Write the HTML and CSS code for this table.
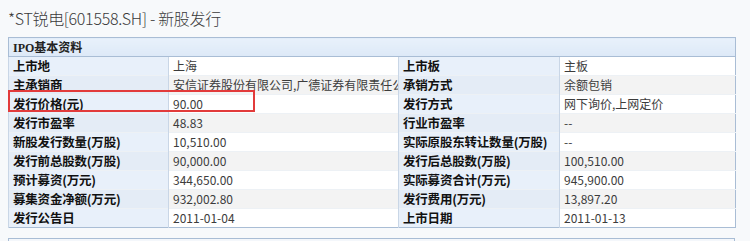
FILE: index.html
```html
<!DOCTYPE html>
<html lang="zh">
<head>
<meta charset="utf-8">
<link rel="stylesheet" href="styles.css">
</head>
<body>
<div class="page">
  <h1 class="title">*ST锐电[601558.SH] - 新股发行</h1>
  <div class="panel">
    <table class="ipo">
      <colgroup>
        <col class="c-l1"><col class="c-v1"><col class="c-l2"><col class="c-v2">
      </colgroup>
      <thead>
        <tr><th colspan="4" class="head">IPO基本资料</th></tr>
      </thead>
      <tbody>
        <tr><td class="lab">上市地</td><td class="val">上海</td><td class="lab">上市板</td><td class="val">主板</td></tr>
        <tr class="alt"><td class="lab">主承销商</td><td class="val">安信证券股份有限公司,广德证券有限责任公司</td><td class="lab">承销方式</td><td class="val">余额包销</td></tr>
        <tr><td class="lab">发行价格(元)</td><td class="val">90.00</td><td class="lab">发行方式</td><td class="val">网下询价,上网定价</td></tr>
        <tr class="alt"><td class="lab">发行市盈率</td><td class="val">48.83</td><td class="lab">行业市盈率</td><td class="val">--</td></tr>
        <tr><td class="lab">新股发行数量(万股)</td><td class="val">10,510.00</td><td class="lab">实际原股东转让数量(万股)</td><td class="val">--</td></tr>
        <tr class="alt"><td class="lab">发行前总股数(万股)</td><td class="val">90,000.00</td><td class="lab">发行后总股数(万股)</td><td class="val">100,510.00</td></tr>
        <tr><td class="lab">预计募资(万元)</td><td class="val">344,650.00</td><td class="lab">实际募资合计(万元)</td><td class="val">945,900.00</td></tr>
        <tr class="alt"><td class="lab">募集资金净额(万元)</td><td class="val">932,002.80</td><td class="lab">发行费用(万元)</td><td class="val">13,897.20</td></tr>
        <tr><td class="lab">发行公告日</td><td class="val">2011-01-04</td><td class="lab">上市日期</td><td class="val">2011-01-13</td></tr>
      </tbody>
    </table>
    <div class="highlight"></div>
  </div>
  <div class="next-panel"></div>
</div>
</body>
</html>
```

FILE: styles.css
```css
html, body {
  margin: 0;
  padding: 0;
  background: #f7f9fb;
}
.page {
  padding: 0 16px 0 8px;
  font-family: "Noto Sans CJK SC", "Noto Sans", sans-serif;
}
.title {
  margin: 0;
  height: 37px;
  line-height: 36px;
  font-size: 16px;
  font-weight: 300;
  color: #3a3a3a;
  letter-spacing: -0.3px;
}
.panel {
  position: relative;
  width: 727px;
}
.ipo {
  width: 727px;
  border-collapse: collapse;
  table-layout: fixed;
  background: #fff;
  border: 1px solid #a9bdd5;
  font-size: 12px;
}
.c-l1 { width: 160px; }
.c-v1 { width: 230px; }
.c-l2 { width: 161px; }
.c-v2 { width: 176px; }
.head {
  height: 18px;
  padding: 0 4px;
  text-align: left;
  font-family: "Liberation Serif", "Noto Sans CJK SC", serif;
  font-weight: bold;
  font-size: 12px;
  color: #222;
  background: linear-gradient(#e8f1fb, #dde9f7);
  border-bottom: 1px solid #a9bdd5;
}
.ipo td {
  height: 18px;
  padding: 0 4px;
  line-height: 18px;
  border-left: 1px solid #c9d6e6;
  border-top: 1px solid #edf1f5;
  white-space: nowrap;
  overflow: hidden;
  text-overflow: clip;
}
.lab {
  background: #e8f0fa;
  font-weight: bold;
  color: #111;
  font-size: 12.5px;
  letter-spacing: -0.2px;
}
.val {
  color: #3c3c3c;
  font-weight: 400;
}
.alt .val { background: #f3f3f3; }
.alt .lab { background: #e4ecf6; }
.highlight {
  position: absolute;
  left: 0;
  top: 53px;
  width: 243px;
  height: 18px;
  border: 2px solid #e23b3b;
}
.next-panel {
  margin-top: 10px;
  width: 725px;
  height: 20px;
  border: 1px solid #a9bdd5;
  background: #f4f7fb;
}
```
